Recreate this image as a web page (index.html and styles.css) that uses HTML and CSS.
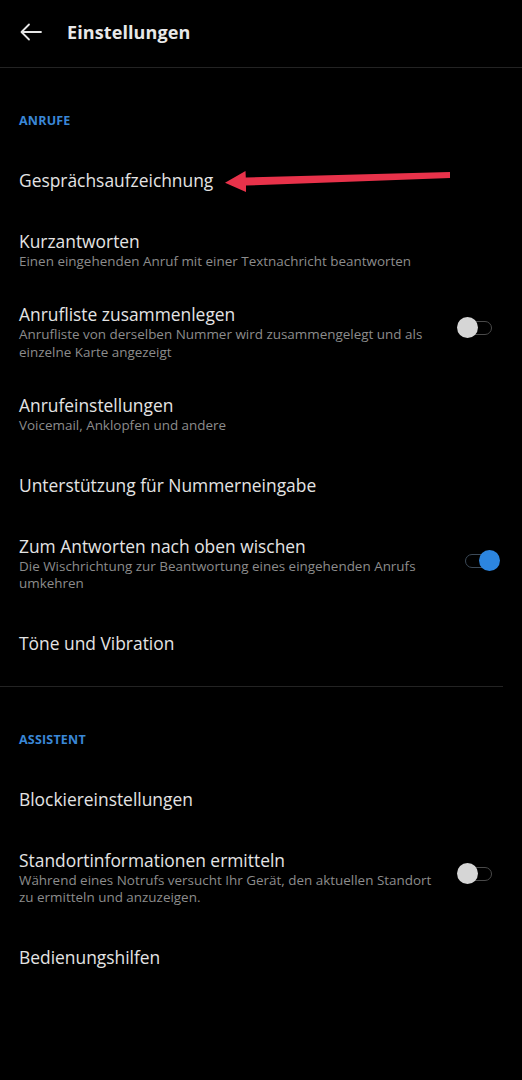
FILE: index.html
```html
<!DOCTYPE html>
<html lang="de">
<head>
<meta charset="utf-8">
<title>Einstellungen</title>
<link rel="stylesheet" href="styles.css">
</head>
<body>
<div class="screen">
  <header class="appbar">
    <svg class="back" width="24" height="20" viewBox="0 0 24 20" aria-hidden="true">
      <path d="M22 10H3M10 2.5L2.5 10L10 17.5" fill="none" stroke="#e6e6e6" stroke-width="1.8" stroke-linecap="round" stroke-linejoin="round"/>
    </svg>
    <h1 class="title">Einstellungen</h1>
  </header>

  <section class="group">
    <div class="cat">ANRUFE</div>
    <div class="item"><div class="text"><div class="t">Gesprächsaufzeichnung</div></div></div>
    <div class="item multi"><div class="text"><div class="t">Kurzantworten</div><div class="s">Einen eingehenden Anruf mit einer Textnachricht beantworten</div></div></div>
    <div class="item multi"><div class="text"><div class="t">Anrufliste zusammenlegen</div><div class="s">Anrufliste von derselben Nummer wird zusammengelegt und als einzelne Karte angezeigt</div></div><span class="switch"><span class="knob"></span></span></div>
    <div class="item multi"><div class="text"><div class="t">Anrufeinstellungen</div><div class="s">Voicemail, Anklopfen und andere</div></div></div>
    <div class="item"><div class="text"><div class="t">Unterstützung für Nummerneingabe</div></div></div>
    <div class="item multi"><div class="text"><div class="t">Zum Antworten nach oben wischen</div><div class="s">Die Wischrichtung zur Beantwortung eines eingehenden Anrufs umkehren</div></div><span class="switch on"><span class="knob"></span></span></div>
    <div class="item"><div class="text"><div class="t">Töne und Vibration</div></div></div>
  </section>

  <section class="group last">
    <div class="cat">ASSISTENT</div>
    <div class="item"><div class="text"><div class="t">Blockiereinstellungen</div></div></div>
    <div class="item multi"><div class="text"><div class="t">Standortinformationen ermitteln</div><div class="s">Während eines Notrufs versucht Ihr Gerät, den aktuellen Standort zu ermitteln und anzuzeigen.</div></div><span class="switch"><span class="knob"></span></span></div>
    <div class="item"><div class="text"><div class="t">Bedienungshilfen</div></div></div>
  </section>

  <svg class="annot" width="522" height="60" viewBox="0 150 522 60" aria-hidden="true">
    <path d="M450 172 L450 178 L246 185.5 L246 192 L225 182.8 L245.5 171 L245.8 177.5 Z" fill="#e8324a"/>
  </svg>
</div>
</body>
</html>
```

FILE: styles.css
```css
* { box-sizing: border-box; margin: 0; padding: 0; }
html, body { background: #000; }
body {
  width: 522px;
  height: 1080px;
  overflow: hidden;
  font-family: "Open Sans", "Noto Sans", sans-serif;
  color: #e4e4e4;
}
.screen { position: relative; width: 522px; height: 1080px; background: #000; }
.appbar {
  height: 68px;
  display: flex;
  align-items: center;
  padding-left: 19px;
  border-bottom: 1px solid #232323;
}
.back { display: block; margin-top: -4px; }
.title {
  margin-left: 24px;
  font-size: 18px;
  font-weight: 700;
  color: #e8e8e8;
  margin-top: -3px;
  letter-spacing: 0.1px;
}
.group { padding-bottom: 10px; border-bottom: 1px solid #232323; margin-right: 19px; }
.group.last { border-bottom: none; }
.cat {
  padding: 45px 0 17px 19px;
  height: 78px;
  font-size: 12.5px;
  line-height: 16px;
  font-weight: 700;
  color: #3a87d6;
  letter-spacing: 0.2px;
}
.item {
  display: flex;
  align-items: center;
  min-height: 67px;
  padding: 16px 0 16px 19px;
}
.item.multi { min-height: 73px; padding: 16.5px 0; padding-left: 19px; }
.text { flex: 1; min-width: 0; padding-right: 12px; }
.t { font-size: 17.4px; line-height: 22px; color: #e4e4e4; }
.s { font-size: 13.45px; line-height: 17.5px; color: #8c8c8c; margin-top: 1px; }
.switch {
  position: relative;
  flex: none;
  width: 34px;
  height: 14px;
  border: 1.5px solid #4a4a4a;
  border-radius: 7px;
  margin-right: 11px;
  margin-top: -8px;
}
.knob {
  position: absolute;
  left: -2px;
  top: -5px;
  width: 21px;
  height: 21px;
  border-radius: 50%;
  background: #d6d6d6;
}
.switch.on { border-color: #3c4a58; margin-right: 4px; margin-top: -6px; }
.switch.on .knob { left: auto; right: -2px; background: #2c85df; }
.annot { position: absolute; left: 0; top: 150px; }
```
